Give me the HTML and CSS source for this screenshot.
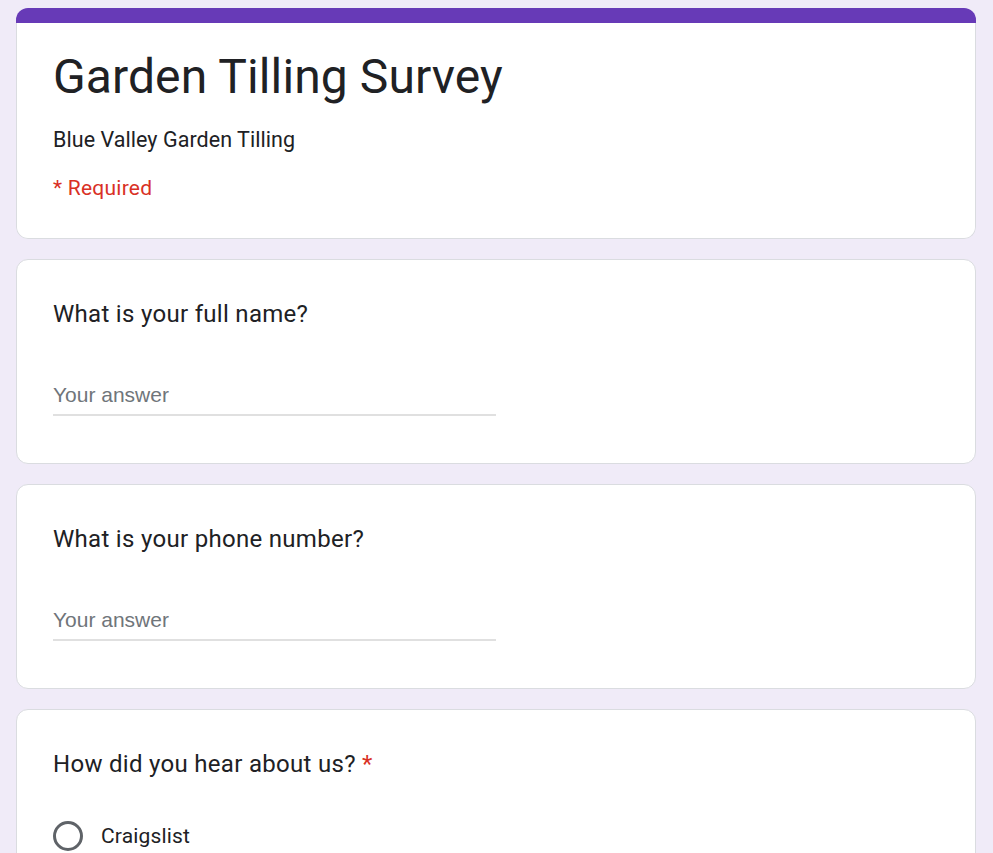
FILE: index.html
```html
<!DOCTYPE html>
<html lang="en">
<head>
<meta charset="utf-8">
<title>Garden Tilling Survey</title>
<link rel="stylesheet" href="styles.css">
</head>
<body>
<main class="page">
  <section class="card card--header">
    <div class="card__bar"></div>
    <div class="card__body card__body--header">
      <h1 class="form-title">Garden Tilling Survey</h1>
      <p class="form-desc">Blue Valley Garden Tilling</p>
      <p class="form-required">* Required</p>
    </div>
  </section>

  <section class="card">
    <div class="card__body">
      <h2 class="question">What is your full name?</h2>
      <div class="answer">Your answer</div>
    </div>
  </section>

  <section class="card">
    <div class="card__body">
      <h2 class="question">What is your phone number?</h2>
      <div class="answer">Your answer</div>
    </div>
  </section>

  <section class="card">
    <div class="card__body">
      <h2 class="question">How did you hear about us? <span class="star">*</span></h2>
      <div class="options">
        <label class="option"><span class="radio"></span><span class="option__label">Craigslist</span></label>
      </div>
    </div>
  </section>
</main>
</body>
</html>
```

FILE: styles.css
```css
html {
  scrollbar-width: none;
  background: #f0ebf8;
}
html::-webkit-scrollbar {
  display: none;
}
body {
  margin: 0;
  padding: 8px 0 40px 16px;
  background: #f0ebf8;
  color: #202124;
  font-family: Roboto, "Liberation Sans", Arial, sans-serif;
}
.page {
  width: 960px;
  display: flex;
  flex-direction: column;
  gap: 20px;
}
.card {
  background: #fff;
  border: 1px solid #dadce0;
  border-radius: 12px;
}
.card--header {
  border: none;
  overflow: hidden;
  background: transparent;
}
.card__bar {
  height: 15px;
  background: #673ab7;
}
.card__body {
  padding: 36px 36px 47px 36px;
}
.card__body--header {
  background: #fff;
  border: 1px solid #dadce0;
  border-top: none;
  border-radius: 0 0 12px 12px;
  padding: 24px 36px 34px 36px;
}
.form-title {
  margin: 0;
  font-size: 48px;
  line-height: 60px;
  font-weight: 400;
  letter-spacing: 0.1px;
}
.form-desc {
  margin: 17px 0 0;
  font-size: 21.5px;
  line-height: 32px;
  letter-spacing: 0.05px;
}
.form-required {
  margin: 16px 0 0;
  font-size: 21px;
  line-height: 32px;
  letter-spacing: 0.25px;
  color: #d93025;
}
.question {
  margin: 0;
  font-size: 24px;
  line-height: 36px;
  font-weight: 400;
  letter-spacing: 0.3px;
}
.star {
  color: #d93025;
}
.answer {
  width: 443px;
  margin-top: 48px;
  padding-bottom: 4px;
  border-bottom: 2px solid #e0e0e0;
  font-family: "Liberation Sans", Arial, sans-serif;
  font-size: 21px;
  line-height: 30px;
  color: #70757a;
}
.options {
  margin-top: 39px;
  display: flex;
  flex-direction: column;
  gap: 18px;
}
.option {
  display: flex;
  align-items: center;
  gap: 18px;
}
.radio {
  width: 30px;
  height: 30px;
  box-sizing: border-box;
  border: 3px solid #5f6368;
  border-radius: 50%;
  flex: none;
}
.option__label {
  font-size: 21px;
  line-height: 30px;
  letter-spacing: 0.15px;
}
```
